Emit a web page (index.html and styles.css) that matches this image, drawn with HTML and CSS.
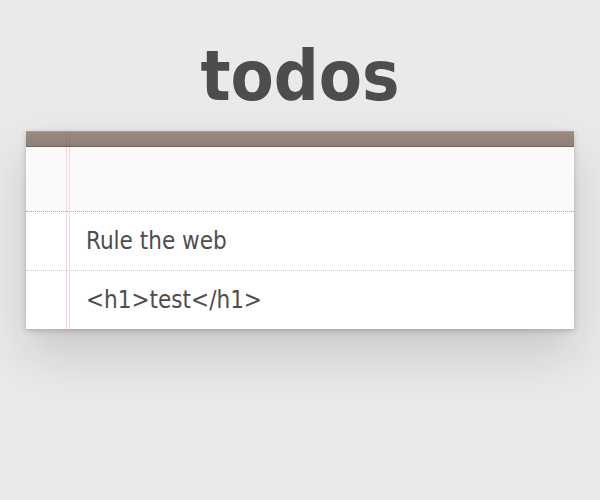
FILE: index.html
```html
<!DOCTYPE html>
<html>
<head>
<meta charset="utf-8">
<link rel="stylesheet" href="styles.css">
</head>
<body>
<h1 class="title">todos</h1>
<section class="app">
  <div class="app-header"></div>
  <div class="new-todo"></div>
  <ul class="todo-list">
    <li class="todo-item">Rule the web</li>
    <li class="todo-item">&lt;h1&gt;test&lt;/h1&gt;</li>
  </ul>
</section>
</body>
</html>
```

FILE: styles.css
```css
html, body {
  margin: 0;
  padding: 0;
}
body {
  background: #eaeaea;
  font-family: "DejaVu Sans Condensed", "DejaVu Sans", sans-serif;
  font-stretch: condensed;
  color: #4d4d4d;
  height: 500px;
}
.title {
  margin: 0;
  padding-top: 41px;
  height: 70px;
  font-size: 70px;
  line-height: 70px;
  font-weight: bold;
  text-align: center;
  color: #4d4d4d;
}
.app {
  position: relative;
  width: 548px;
  margin: 20px auto 0;
  background: #fff;
  box-shadow: 0 2px 6px 0 rgba(0,0,0,0.2), 0 25px 50px 0 rgba(0,0,0,0.15);
}
.app::before {
  content: "";
  position: absolute;
  top: 0;
  bottom: 0;
  left: 40px;
  width: 2px;
  border-left: 1px solid #f5d6d6;
  border-right: 1px solid #f5d6d6;
}
.app-header {
  position: relative;
  height: 15px;
  border-bottom: 1px solid #6c615c;
  background: linear-gradient(to bottom, rgba(132,110,100,0.8), rgba(112,94,86,0.8));
  box-shadow: inset 0 1px 0 rgba(255,255,255,0.15);
}
.new-todo {
  height: 64px;
  background: rgba(0,0,0,0.02);
  border-bottom: 1px dotted #aaa;
}
.todo-list {
  list-style: none;
  margin: 0;
  padding: 0;
}
.todo-item {
  padding: 15px 15px 15px 60px;
  font-size: 24px;
  line-height: 28px;
  border-bottom: 1px dotted #ccc;
  color: #4d4d4d;
}
.todo-item:last-child {
  border-bottom: none;
}
```
